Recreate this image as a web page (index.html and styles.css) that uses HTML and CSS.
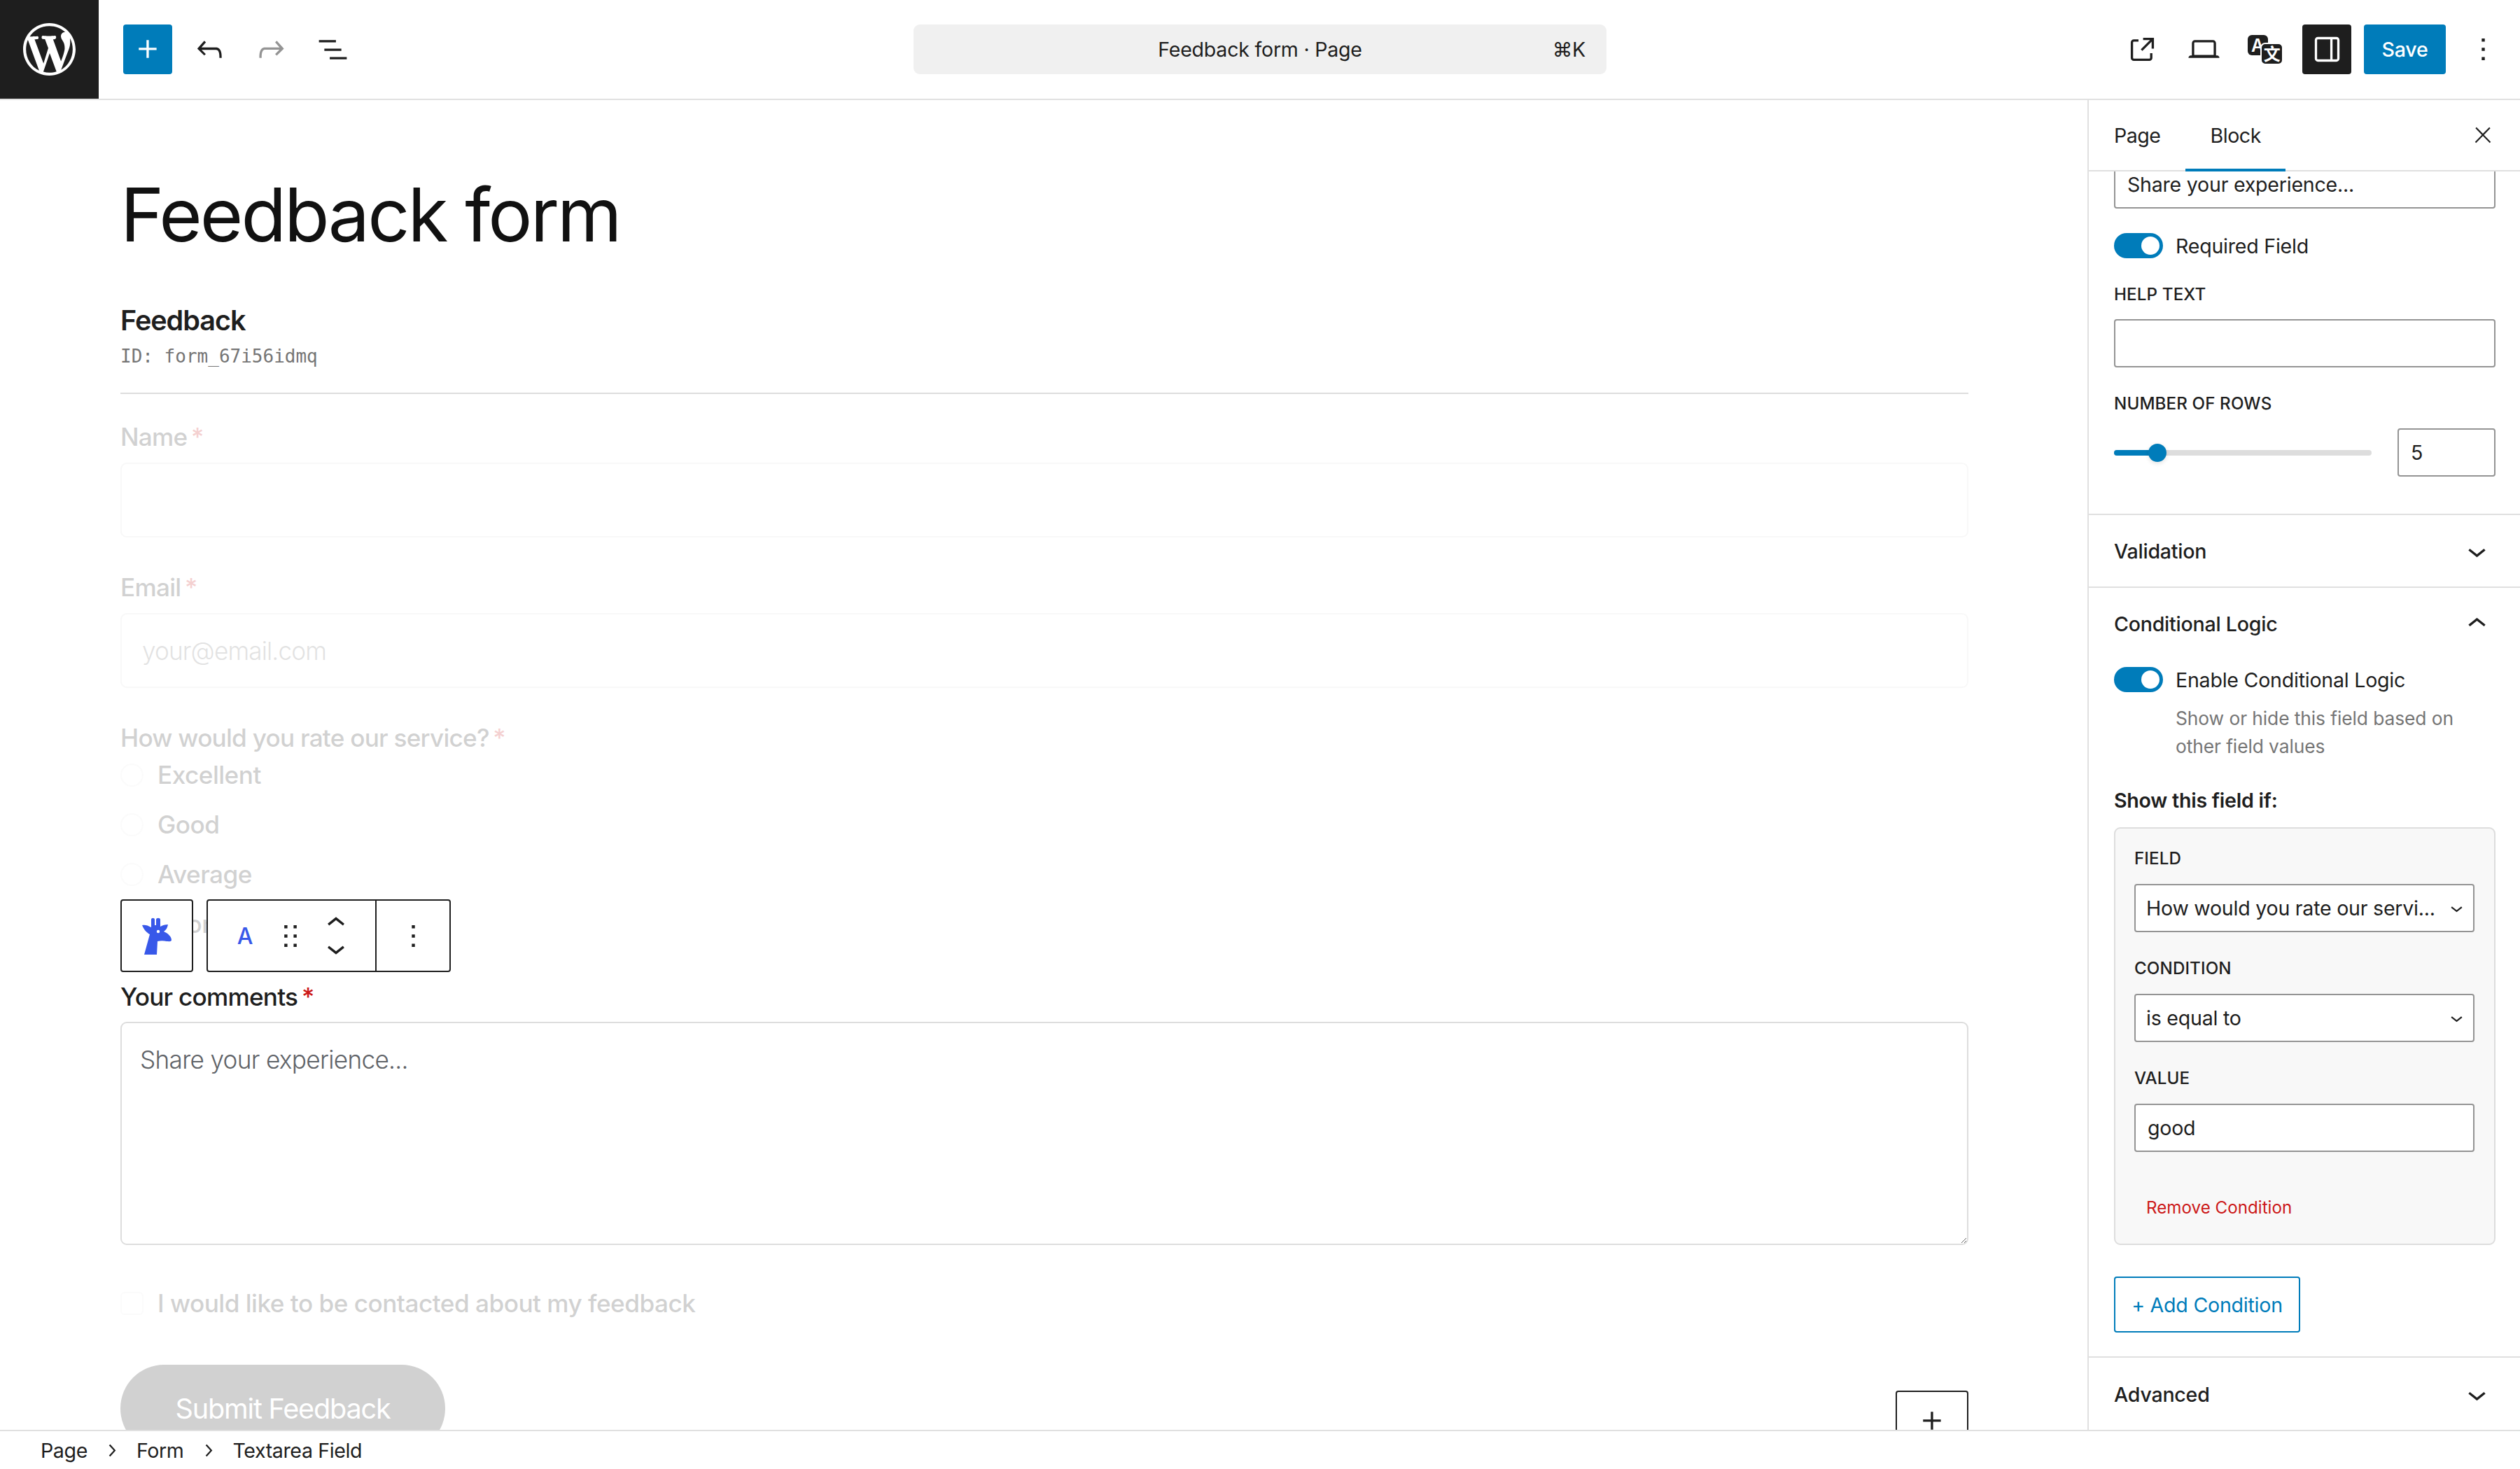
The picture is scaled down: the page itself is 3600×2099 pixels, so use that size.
FILE: index.html
```html
<!DOCTYPE html>
<html lang="en">
<head>
    <meta charset="UTF-8">
    <meta name="viewport" content="width=device-width, initial-scale=1.0">
    <title>Feedback form - Page</title>
    <link rel="stylesheet" href="styles.css">
</head>
<body>
    <header class="topbar">
        <div class="topbar-left">
            <a class="wp-logo">
                <svg viewBox="0 0 20 20" width="75" height="75"><path fill="#fff" d="M20 10c0-5.51-4.49-10-10-10C4.48 0 0 4.49 0 10c0 5.52 4.48 10 10 10 5.51 0 10-4.48 10-10zM7.78 15.37L4.37 6.22c.55-.02 1.17-.08 1.17-.08.5-.06.44-1.13-.06-1.11 0 0-1.45.11-2.37.11-.18 0-.37 0-.58-.01C4.12 2.69 6.87 1.11 10 1.11c2.33 0 4.45.87 6.05 2.34-.68-.11-1.65.39-1.65 1.58 0 .74.45 1.36.9 2.1.35.61.55 1.36.55 2.46 0 1.49-1.4 5-1.4 5l-3.03-8.37c.54-.02.82-.17.82-.17.5-.05.44-1.25-.06-1.22 0 0-1.44.12-2.38.12-.87 0-2.33-.12-2.33-.12-.5-.03-.56 1.2-.06 1.22l.92.08 1.26 3.41zM17.41 10c.24-.64.74-1.87.43-4.25.7 1.29 1.05 2.71 1.05 4.25 0 3.29-1.73 6.24-4.4 7.78.97-2.59 1.94-5.2 2.92-7.78zM6.1 18.09C3.12 16.65 1.11 13.53 1.11 10c0-1.3.23-2.48.72-3.59C3.25 10.3 4.67 14.2 6.1 18.09zm4.03-6.63l2.58 6.98c-.86.29-1.76.45-2.71.45-.79 0-1.57-.11-2.29-.33.81-2.38 1.62-4.74 2.42-7.1z"/></svg>
            </a>
            <div class="tools">
                <button class="icon-btn primary"><svg class="icon" viewBox="0 0 24 24"><path d="M11 12.5V17.5H12.5V12.5H17.5V11H12.5V6H11V11H6V12.5H11Z"/></svg></button>
                <button class="icon-btn"><svg class="icon" viewBox="0 0 24 24"><path d="M18.3 11.7c-.6-.6-1.4-.9-2.3-.9H6.7l2.9-3.3-1.1-1-4.5 5L8.5 16l1-1-2.7-2.7H16c.5 0 .9.2 1.3.5 1 1 1 3.4 1 4.5v.3h1.5v-.2c0-1.5 0-4.3-1.5-5.7z"/></svg></button>
                <button class="icon-btn muted"><svg class="icon" viewBox="0 0 24 24"><path d="M15.6 6.5l-1.1 1 2.9 3.3H8c-.9 0-1.7.3-2.3.9-1.4 1.5-1.4 4.2-1.4 5.6v.2h1.5v-.3c0-1.1 0-3.5 1-4.5.3-.3.7-.5 1.3-.5h9.2L14.5 15l1.1 1.1 4.6-4.6-4.6-5z"/></svg></button>
                <button class="icon-btn"><svg class="icon" viewBox="0 0 24 24"><path d="M3 6h11v1.5H3V6Zm3.5 5.5h11V13h-11v-1.5ZM21 17H10v1.5h11V17Z"/></svg></button>
            </div>
        </div>
        <div class="command-bar">
            <span>Feedback form · Page</span>
            <span class="shortcut">⌘K</span>
        </div>
        <div class="topbar-right">
            <button class="icon-btn"><svg class="icon" viewBox="0 0 24 24"><path d="M19.5 4.5h-7V6h4.44l-5.97 5.97 1.06 1.06L18 7.06v4.44h1.5v-7Zm-13 1a2 2 0 0 0-2 2v10a2 2 0 0 0 2 2h10a2 2 0 0 0 2-2v-3H17v3a.5.5 0 0 1-.5.5h-10a.5.5 0 0 1-.5-.5v-10a.5.5 0 0 1 .5-.5h3V5.5h-3Z"/></svg></button>
            <button class="icon-btn"><svg class="icon" viewBox="0 0 24 24"><path d="M20.5 16h-.7V8c0-1.100-.9-2-2-2H6.200c-1.100 0-2 .9-2 2v8h-.7c-.8 0-1.500.7-1.500 1.500h20c0-.8-.7-1.500-1.500-1.500zM5.700 8c0-.3.2-.5.5-.5h11.600c.3 0 .5.2.5.5v7.600H5.700V8z"/></svg></button>
            <button class="icon-btn">
                <svg class="icon translate" viewBox="0 0 50 42">
                    <rect x="0" y="0" width="29" height="29" rx="6" fill="#1e1e1e"/>
                    <text x="14" y="24" class="translate-a">A</text>
                    <rect x="19" y="12" width="31" height="30" rx="6" fill="#1e1e1e" stroke="#fff" stroke-width="2"/>
                    <text x="34.500" y="36" class="translate-b">文</text>
                </svg>
            </button>
            <button class="icon-btn dark"><svg class="icon" viewBox="0 0 24 24"><path d="M18 4H6c-1.100 0-2 .9-2 2v12c0 1.100.9 2 2 2h12c1.100 0 2-.9 2-2V6c0-1.100-.9-2-2-2zm-4 14.500H6c-.3 0-.5-.2-.5-.5V6c0-.3.2-.5.5-.5h8v13zm4.500-.5c0 .3-.2.5-.5.5h-2.500v-13H18c.3 0 .5.2.5.5v12z"/></svg></button>
            <button class="save-btn">Save</button>
            <button class="icon-btn"><svg class="icon" viewBox="0 0 24 24"><path d="M13 19h-2v-2h2v2zm0-6h-2v-2h2v2zm0-6h-2V5h2v2z"/></svg></button>
        </div>
    </header>

    <div class="main">
        <main class="editor">
            <h1 class="page-title">Feedback form</h1>
            <h2 class="form-name">Feedback</h2>
            <p class="form-id">ID: form_67i56idmq</p>

            <div class="dim field-name">
                <label class="field-label">Name <span class="req">*</span></label>
                <div class="field-input"></div>
            </div>
            <div class="dim field-email">
                <label class="field-label">Email <span class="req">*</span></label>
                <div class="field-input placeholder">your@email.com</div>
            </div>
            <div class="dim field-rate">
                <label class="field-label">How would you rate our service? <span class="req">*</span></label>
                <div class="radio-list">
                    <div class="option"><span class="radio"></span>Excellent</div>
                    <div class="option"><span class="radio"></span>Good</div>
                    <div class="option"><span class="radio"></span>Average</div>
                    <div class="option"><span class="radio"></span>Poor</div>
                </div>
            </div>
            <div class="field-comments">
                <label class="field-label">Your comments <span class="req">*</span></label>
                <textarea class="comments-box">Share your experience...</textarea>
            </div>
            <div class="dim field-check">
                <div class="option"><span class="checkbox"></span>I would like to be contacted about my feedback</div>
            </div>
            <div class="dim field-submit">
                <span class="submit-btn">Submit Feedback</span>
            </div>

            <!-- block toolbar floats over the form -->
            <div class="block-toolbar">
                <div class="tb-group tb-parent">
                    <svg class="giraffe" viewBox="0 0 42 53">
                        <path fill="#3858e9" d="M3 53 L11 24 C7 22 3 18 0 11 C4 10 8 11 13 14 L13 3 C13 0 18 0 18 3 L18 11 L20 11 L20 3 C20 0 26 0 26 3 L26 13 C29 11 33 10 37 10 C36 15 34 18 31 20 C36 22 42 27 42 32 C42 35 38 34 35 34 C31 33 26 33 22 34 L21 53 Z"/>
                        <circle cx="23" cy="20" r="2.200" fill="#fff"/>
                    </svg>
                </div>
                <div class="tb-group">
                    <div class="tb-main">
                        <span class="tb-type">A</span>
                        <svg class="icon tb-drag" viewBox="0 0 24 24"><path d="M8 7h2V5H8v2zm0 6h2v-2H8v2zm0 6h2v-2H8v2zm6-14v2h2V5h-2zm0 8h2v-2h-2v2zm0 6h2v-2h-2v2z"/></svg>
                        <div class="tb-mover">
                            <svg class="icon" viewBox="6 7 12 10"><path d="M6.500 12.400L12 8l5.500 4.400-.9 1.200L12 10l-4.500 3.600-1-1.200z"/></svg>
                            <svg class="icon" viewBox="6 7 12 10"><path d="M17.500 11.600L12 16l-5.500-4.400.9-1.200L12 14l4.500-3.600 1 1.200z"/></svg>
                        </div>
                    </div>
                    <div class="tb-more">
                        <svg class="icon" viewBox="0 0 24 24"><path d="M13 19h-2v-2h2v2zm0-6h-2v-2h2v2zm0-6h-2V5h2v2z"/></svg>
                    </div>
                </div>
            </div>

            <div class="block-appender">
                <svg class="icon" viewBox="0 0 24 24"><path d="M11 12.500V17.500H12.500V12.500H17.500V11H12.500V6H11V11H6V12.500H11Z"/></svg>
            </div>
        </main>

        <aside class="sidebar">
            <div class="sidebar-tabs">
                <div class="tab">Page</div>
                <div class="tab active">Block</div>
                <svg class="icon close-icon" viewBox="0 0 24 24"><path d="M13 11.800l6.100-6.300-1-1-6.100 6.200-6.100-6.200-1 1 6.100 6.300-6.500 6.700 1 1 6.500-6.600 6.500 6.600 1-1z"/></svg>
            </div>
            <div class="sidebar-body">
                <section class="panel settings-panel">
                    <div class="input scrolled-input">Share your experience...</div>
                    <div class="toggle-row">
                        <span class="toggle"><span class="toggle-thumb"></span></span>
                        <span>Required Field</span>
                    </div>
                    <label class="cap-label gap-top">Help text</label>
                    <div class="input"></div>
                    <label class="cap-label gap-top">Number of rows</label>
                    <div class="range-row">
                        <div class="range-track">
                            <div class="range-fill" style="width: 62px"></div>
                            <span class="range-thumb"></span>
                        </div>
                        <div class="input number-input">5</div>
                    </div>
                </section>
                <section class="panel-head">
                    <span>Validation</span>
                    <svg class="icon" viewBox="0 0 24 24"><path d="M17.500 11.600L12 16l-5.500-4.400.9-1.200L12 14l4.500-3.600 1 1.200z"/></svg>
                </section>
                <section class="panel logic-panel">
                    <div class="panel-head plain">
                        <span>Conditional Logic</span>
                        <svg class="icon" viewBox="0 0 24 24"><path d="M6.500 12.400L12 8l5.500 4.400-.9 1.200L12 10l-4.500 3.600-1-1.200z"/></svg>
                    </div>
                    <div class="toggle-row logic-toggle">
                        <span class="toggle"><span class="toggle-thumb"></span></span>
                        <span>Enable Conditional Logic</span>
                    </div>
                    <p class="help">Show or hide this field based on other field values</p>
                    <p class="show-if">Show this field if:</p>
                    <div class="condition-box">
                        <label class="cap-label">Field</label>
                        <div class="input select"><span>How would you rate our servi...</span><svg class="icon small" viewBox="0 0 24 24"><path d="M17.500 11.600L12 16l-5.500-4.400.9-1.200L12 14l4.500-3.600 1 1.200z"/></svg></div>
                        <label class="cap-label gap-top">Condition</label>
                        <div class="input select"><span>is equal to</span><svg class="icon small" viewBox="0 0 24 24"><path d="M17.500 11.600L12 16l-5.500-4.400.9-1.200L12 14l4.500-3.600 1 1.200z"/></svg></div>
                        <label class="cap-label gap-top">Value</label>
                        <div class="input">good</div>
                        <a class="remove-link">Remove Condition</a>
                    </div>
                    <button class="add-btn">+ Add Condition</button>
                </section>
                <section class="panel-head tall">
                    <span>Advanced</span>
                    <svg class="icon" viewBox="0 0 24 24"><path d="M17.500 11.600L12 16l-5.500-4.400.9-1.200L12 14l4.500-3.600 1 1.200z"/></svg>
                </section>
            </div>
        </aside>
    </div>

    <footer class="breadcrumbs">
        <span>Page</span>
        <svg class="crumb-sep" viewBox="0 0 24 24"><path d="M10.600 6L9.400 7l4.600 5-4.600 5 1.200 1 5.400-6z"/></svg>
        <span>Form</span>
        <svg class="crumb-sep" viewBox="0 0 24 24"><path d="M10.600 6L9.400 7l4.600 5-4.600 5 1.200 1 5.400-6z"/></svg>
        <span>Textarea Field</span>
    </footer>
</body>
</html>
```

FILE: styles.css
```css
* {
    box-sizing: border-box;
}
body {
    margin: 0;
    height: 2099px;
    overflow: hidden;
    display: flex;
    flex-direction: column;
    background-color: #fff;
    color: #1e1e1e;
    font-family: Inter, "Liberation Sans", sans-serif;
    font-size: 28.6px;
    letter-spacing: -0.25px;
}
button {
    font-family: inherit;
    letter-spacing: inherit;
    border: none;
    padding: 0;
    background: none;
    color: inherit;
}
svg {
    display: block;
}
.icon {
    width: 53px;
    height: 53px;
    fill: currentColor;
}

/* top bar */
.topbar {
    flex: none;
    height: 143px;
    border-bottom: 2px solid #e0e0e0;
    display: grid;
    grid-template-columns: 1fr 990px 1fr;
    align-items: center;
}
.topbar-left {
    display: flex;
    align-items: center;
    height: 141px;
}
.wp-logo {
    width: 141px;
    height: 141px;
    background-color: #1e1e1e;
    display: flex;
    align-items: center;
    justify-content: center;
}
.tools {
    display: flex;
    gap: 18px;
    margin-left: 35px;
}
.icon-btn {
    width: 70px;
    height: 71px;
    border-radius: 4px;
    display: flex;
    align-items: center;
    justify-content: center;
}
.icon-btn.primary {
    background-color: #007cba;
    color: #fff;
}
.icon-btn.muted {
    color: #949494;
}
.icon-btn.dark {
    background-color: #1e1e1e;
    color: #fff;
}
.command-bar {
    height: 71px;
    background-color: #f0f0f0;
    border-radius: 9px;
    display: flex;
    align-items: center;
    justify-content: center;
    position: relative;
}
.shortcut {
    position: absolute;
    right: 30px;
}
.topbar-right {
    display: flex;
    align-items: center;
    justify-content: flex-end;
    gap: 18px;
    padding-right: 18px;
}
.translate {
    width: 50px;
    height: 42px;
}
.translate-a {
    font-family: Inter, sans-serif;
    font-size: 25px;
    font-weight: 600;
    fill: #fff;
    text-anchor: middle;
}
.translate-b {
    font-family: "Noto Sans CJK SC", sans-serif;
    font-size: 24px;
    font-weight: 700;
    fill: #fff;
    text-anchor: middle;
}
.save-btn {
    width: 117px;
    height: 71px;
    border-radius: 4px;
    background-color: #007cba;
    color: #fff;
    font-size: 28.6px;
    font-weight: 500;
}

/* layout */
.main {
    flex: 1;
    display: flex;
    min-height: 0;
}
.editor {
    flex: 1;
    position: relative;
    overflow: hidden;
    padding: 100px 170px 0 172px;
}
.page-title {
    margin: 0;
    font-size: 105.6px;
    line-height: 127px;
    font-weight: 400;
    letter-spacing: -0.028em;
    color: #111;
}
.form-name {
    margin: 64px 0 0;
    font-size: 39.6px;
    line-height: 48px;
    font-weight: 600;
    letter-spacing: -0.027em;
}
.form-id {
    margin: 11px 0 0;
    padding-bottom: 36px;
    border-bottom: 2px solid #ddd;
    font-family: "DejaVu Sans Mono", monospace;
    font-size: 26px;
    line-height: 32px;
    letter-spacing: 0;
    color: #757575;
}

/* form fields */
.dim {
    opacity: 0.2;
}
.field-label {
    display: block;
    font-size: 35.2px;
    line-height: 44px;
    font-weight: 550;
    letter-spacing: -0.022em;
}
.req {
    color: #cc1818;
    margin-left: -3px;
}
.field-name {
    margin-top: 39px;
}
.field-email,
.field-rate {
    margin-top: 49px;
}
.field-input {
    height: 107px;
    margin-top: 15px;
    border: 2px solid #ddd;
    border-radius: 9px;
    padding: 0 29px;
    display: flex;
    align-items: center;
    font-size: 35.2px;
    letter-spacing: -0.025em;
}
.placeholder {
    color: #757575;
    font-weight: 300;
}
.radio-list {
    margin-top: 9px;
    display: flex;
    flex-direction: column;
    gap: 27px;
}
.option {
    display: flex;
    align-items: center;
    gap: 20px;
    font-size: 35.2px;
    line-height: 44px;
    font-weight: 550;
    letter-spacing: -0.015em;
}
.radio,
.checkbox {
    flex: none;
    width: 33px;
    height: 33px;
    border: 2px solid #eee;
}
.radio {
    border-radius: 50%;
}
.checkbox {
    border-radius: 6px;
}
.field-comments {
    margin-top: 60px;
}
.comments-box {
    display: block;
    width: 100%;
    height: 319px;
    margin-top: 14px;
    padding: 30px 26px;
    border: 2px solid #ddd;
    border-radius: 9px;
    font-family: Inter, sans-serif;
    font-size: 35.2px;
    line-height: 44px;
    font-weight: 300;
    letter-spacing: -0.02em;
    color: #5f6368;
    outline: none;
}
.field-check {
    margin-top: 61px;
}
.field-submit {
    margin-top: 66px;
}
.submit-btn {
    display: flex;
    align-items: center;
    justify-content: center;
    width: 464px;
    height: 125px;
    border-radius: 63px;
    background-color: #1e1e1e;
    color: #fff;
    font-size: 39.6px;
    font-weight: 400;
    letter-spacing: -0.03em;
}
.block-toolbar {
    position: absolute;
    left: 172px;
    top: 1142px;
    display: flex;
    gap: 19px;
    height: 104px;
}
.tb-group {
    display: flex;
    height: 104px;
    background-color: #fff;
    border: 2px solid #1e1e1e;
    border-radius: 4px;
}
.tb-parent {
    width: 104px;
    align-items: center;
    justify-content: center;
}
.giraffe {
    width: 42px;
    height: 53px;
}
.tb-main {
    width: 241px;
    display: flex;
    align-items: center;
    padding-left: 18px;
    border-right: 2px solid #1e1e1e;
}
.tb-type {
    width: 70px;
    text-align: center;
    color: #3858e9;
    font-size: 32px;
    font-weight: 500;
}
.tb-drag {
    width: 60px;
}
.tb-mover {
    width: 70px;
    display: flex;
    flex-direction: column;
    align-items: center;
    gap: 14px;
}
.tb-mover .icon {
    width: 26px;
    height: 22px;
}
.tb-more {
    width: 104px;
    display: flex;
    align-items: center;
    justify-content: center;
}
.block-appender {
    position: absolute;
    right: 170px;
    bottom: -48px;
    width: 104px;
    height: 104px;
    padding-top: 15px;
    border: 2px solid #1e1e1e;
    border-radius: 4px;
    display: flex;
    justify-content: center;
    align-items: flex-start;
    background-color: #fff;
}

/* sidebar */
.sidebar {
    flex: none;
    width: 618px;
    border-left: 2px solid #e0e0e0;
    display: flex;
    flex-direction: column;
    overflow: hidden;
}
.sidebar-tabs {
    flex: none;
    height: 102px;
    border-bottom: 2px solid #e0e0e0;
    display: flex;
    align-items: stretch;
    position: relative;
    z-index: 1;
    background-color: #fff;
}
.tab {
    padding: 0 35px 0 36px;
    display: flex;
    align-items: center;
    position: relative;
    letter-spacing: -0.5px;
}
.tab.active::after {
    content: "";
    position: absolute;
    left: 0;
    right: 0;
    bottom: -2px;
    height: 4px;
    background-color: #007cba;
}
.close-icon {
    position: absolute;
    right: 35px;
    top: 32px;
    width: 36px;
    height: 36px;
}
.sidebar-body {
    flex: 1;
    min-height: 0;
    overflow: hidden;
}
.panel {
    padding: 0 35px 0 36px;
    border-bottom: 2px solid #e0e0e0;
}
.settings-panel {
    padding-bottom: 53px;
}
.input {
    height: 69px;
    border: 2px solid #949494;
    border-radius: 4px;
    background-color: #fff;
    padding: 0 17px;
    display: flex;
    align-items: center;
}
.scrolled-input {
    margin-top: -16px;
}
.toggle-row {
    display: flex;
    align-items: center;
    gap: 18px;
    margin-top: 35px;
}
.toggle {
    flex: none;
    width: 70px;
    height: 36px;
    padding: 0 5px;
    border-radius: 18px;
    background-color: #007cba;
    display: flex;
    align-items: center;
    justify-content: flex-end;
}
.toggle-thumb {
    width: 26px;
    height: 26px;
    border-radius: 50%;
    background-color: #fff;
}
.cap-label {
    display: block;
    font-size: 24.2px;
    line-height: 32px;
    font-weight: 500;
    letter-spacing: 0.1px;
    text-transform: uppercase;
    margin-bottom: 19px;
}
.gap-top {
    margin-top: 36px;
}
.range-row {
    display: flex;
    align-items: center;
    gap: 37px;
}
.range-track {
    flex: 1;
    height: 8px;
    border-radius: 4px;
    background-color: #ddd;
    position: relative;
}
.range-fill {
    height: 8px;
    border-radius: 4px;
    background-color: #007cba;
}
.range-thumb {
    position: absolute;
    left: 49px;
    top: -9px;
    width: 26px;
    height: 26px;
    border-radius: 50%;
    background-color: #007cba;
    box-shadow: 0 2px 6px rgba(0, 0, 0, 0.12);
}
.number-input {
    flex: none;
    width: 140px;
}
.panel-head {
    height: 104px;
    padding: 0 35px 0 36px;
    border-bottom: 2px solid #e0e0e0;
    display: flex;
    align-items: center;
    justify-content: space-between;
    font-weight: 500;
}
.panel-head.plain {
    height: 102px;
    padding: 0;
    border-bottom: none;
}
.panel-head.tall {
    height: 104px;
    border-bottom: none;
}
.logic-panel {
    padding-bottom: 34px;
}
.logic-toggle {
    margin-top: 11px;
}
.help {
    margin: 17px 0 0;
    padding-left: 88px;
    font-size: 26.4px;
    line-height: 40px;
    letter-spacing: -0.1px;
    color: #757575;
}
.show-if {
    margin: 40px 0 0;
    line-height: 36px;
    font-weight: 600;
}
.condition-box {
    margin-top: 20px;
    padding: 27px 28px 35px 27px;
    background-color: #f8f8f8;
    border: 2px solid #ddd;
    border-radius: 9px;
}
.condition-box .cap-label {
    margin-bottom: 20px;
}
.select {
    justify-content: space-between;
    padding: 0 6px 0 15px;
}
.icon.small {
    width: 35px;
    height: 35px;
}
.remove-link {
    display: block;
    margin-top: 64px;
    padding-left: 17px;
    font-size: 24.2px;
    line-height: 32px;
    letter-spacing: 0;
    color: #cc1818;
}
.add-btn {
    display: block;
    width: 266px;
    height: 80px;
    margin-top: 45px;
    border: 2px solid #007cba;
    border-radius: 4px;
    color: #007cba;
    font-size: 28.6px;
}

/* breadcrumbs */
.breadcrumbs {
    flex: none;
    height: 56px;
    border-top: 2px solid #e0e0e0;
    background-color: #fff;
    padding-left: 58px;
    display: flex;
    align-items: center;
    position: relative;
    letter-spacing: -0.4px;
}
.crumb-sep {
    width: 35px;
    height: 35px;
    margin: 0 17.5px;
    fill: currentColor;
}
```
